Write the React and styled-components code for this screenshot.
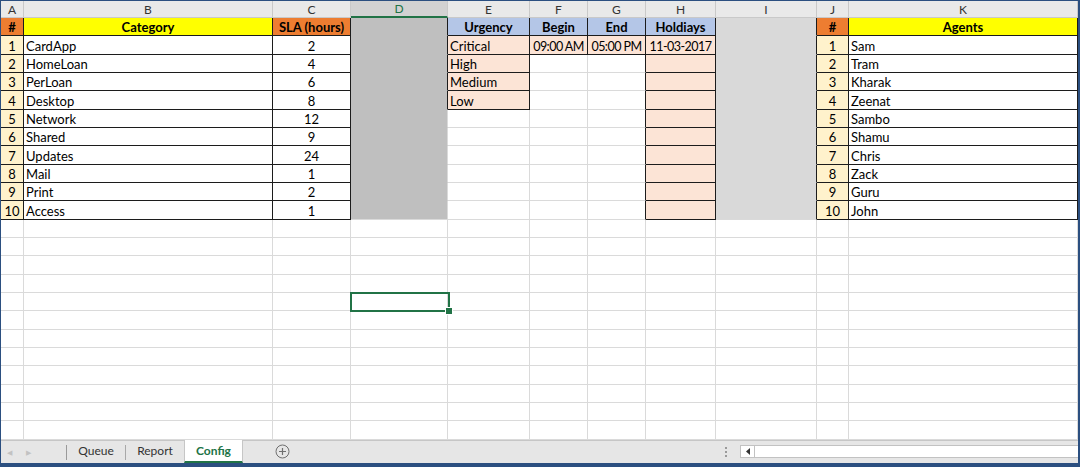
import React from 'react';
import styled, { createGlobalStyle } from 'styled-components';

const Global = createGlobalStyle`
  html, body { margin: 0; padding: 0; background: #fff; }
  body { font-family: "Lato", "Liberation Sans", sans-serif; }
`;

const BLACK = '#1c1c1c';
const GRID = '#dadada';
const ORANGE = '#ed7d31';
const YELLOW = '#ffff00';
const CREAM = '#fff2cc';
const BLUE = '#b4c6e7';
const PEACH = '#fce4d6';
const DGRAY = '#bfbfbf';
const LGRAY = '#d9d9d9';
const GREEN = '#217346';

const Window = styled.div`
  width: 1080px;
  height: 467px;
  box-sizing: border-box;
  border-top: 1px solid #2b4f80;
  border-left: 1px solid #2b4f80;
  border-right: 2px solid #2b4f80;
  border-bottom: 4px solid #2b4f80;
  display: flex;
  flex-direction: column;
  overflow: hidden;
`;

const Sheet = styled.div`
  position: relative;
  display: grid;
  grid-template-columns: 23px 249px 78px 97px 82px 58px 58px 70px 101px 32px 1fr;
  grid-template-rows: 17px repeat(23, 18.333px);
  overflow: hidden;
`;

const ColHead = styled.div`
  box-sizing: border-box;
  background: ${(p) => (p.$active ? '#d2d2d2' : '#e9e9e9')};
  color: ${(p) => (p.$active ? GREEN : '#333')};
  border-right: 1px solid #c9c9c9;
  border-bottom: ${(p) => (p.$active ? `2px solid ${GREEN}` : '1px solid #c9c9c9')};
  font-size: 12px;
  display: flex;
  align-items: center;
  justify-content: center;
`;

const Cell = styled.div`
  box-sizing: border-box;
  background: ${(p) => p.$bg};
  border-right: 1px solid ${(p) => p.$rb};
  border-bottom: 1px solid ${(p) => p.$bb};
  font-size: ${(p) => (p.$tight ? '12.5px' : '13px')};
  letter-spacing: ${(p) => (p.$tight ? '-0.55px' : 'normal')};
  font-weight: ${(p) => (p.$bold ? 700 : 400)};
  color: #000;
  line-height: 15px;
  display: flex;
  align-items: flex-end;
  justify-content: ${(p) => (p.$align === 'center' ? 'center' : 'flex-start')};
  padding: 0 2px 0;
  white-space: nowrap;
  overflow: hidden;
`;

const Selection = styled.div`
  position: absolute;
  left: 349px;
  top: 291px;
  width: 100px;
  height: 20px;
  box-sizing: border-box;
  border: 2px solid ${GREEN};
  pointer-events: none;
`;

const Handle = styled.div`
  position: absolute;
  right: -5px;
  bottom: -5px;
  width: 6px;
  height: 6px;
  background: ${GREEN};
  border: 1px solid #fff;
`;

const TabBar = styled.div`
  flex: 1;
  background: #e6e6e6;
  border-top: 1px solid #c6c6c6;
  display: flex;
  align-items: stretch;
  font-size: 12px;
  color: #333;
`;

const NavArrows = styled.div`
  width: 66px;
  display: flex;
  align-items: center;
  gap: 14px;
  padding-left: 6px;
  box-sizing: border-box;
  border-right: 1px solid #9a9a9a;
  margin: 4px 0 3px;
  color: #c2c2c2;
  font-size: 7px;
`;

const Tab = styled.div`
  width: ${(p) => p.$w}px;
  display: flex;
  align-items: center;
  justify-content: center;
  box-sizing: border-box;
  background: ${(p) => (p.$active ? '#fff' : 'transparent')};
  color: ${(p) => (p.$active ? GREEN : '#333')};
  font-weight: ${(p) => (p.$active ? 700 : 400)};
  border-bottom: ${(p) => (p.$active ? `2px solid ${GREEN}` : '2px solid transparent')};
  margin-top: ${(p) => (p.$active ? '-1px' : '0')};
  ${(p) => (p.$active ? 'border-left: 1px solid #c6c6c6; border-right: 1px solid #c6c6c6;' : '')}
`;

const TabSep = styled.div`
  width: 1px;
  background: #a8a8a8;
  margin: 4px 0 3px;
`;

const AddBtn = styled.div`
  display: flex;
  align-items: center;
  margin-left: 32px;
`;

const Spacer = styled.div`
  flex: 1;
`;

const Dots = styled.div`
  display: flex;
  flex-direction: column;
  justify-content: center;
  gap: 2px;
  margin-right: 13px;
  & > span {
    width: 2px;
    height: 2px;
    background: #9a9a9a;
  }
`;

const Scroll = styled.div`
  width: 338px;
  align-self: center;
  height: 13px;
  box-sizing: border-box;
  border: 1px solid #c2c2c2;
  border-right: none;
  background: #fff;
  display: flex;
`;

const ScrollBtn = styled.div`
  width: 13px;
  border-right: 1px solid #c2c2c2;
  display: flex;
  align-items: center;
  justify-content: center;
`;

const colLetters = ['A', 'B', 'C', 'D', 'E', 'F', 'G', 'H', 'I', 'J', 'K'];
const categories = [
  ['CardApp', 2], ['HomeLoan', 4], ['PerLoan', 6], ['Desktop', 8], ['Network', 12],
  ['Shared', 9], ['Updates', 24], ['Mail', 1], ['Print', 2], ['Access', 1],
];
const urgency = ['Critical', 'High', 'Medium', 'Low'];
const agents = ['Sam', 'Tram', 'Kharak', 'Zeenat', 'Sambo', 'Shamu', 'Chris', 'Zack', 'Guru', 'John'];

function cellSpec(r, c) {
  const s = { bg: '#fff', rb: GRID, bb: GRID, text: '', bold: false, align: 'left', tight: false };
  const inT = r <= 11;
  if (c === 0 && inT) {
    Object.assign(s, { bg: r === 1 ? ORANGE : CREAM, rb: BLACK, bb: BLACK, align: 'center', text: r === 1 ? '#' : String(r - 1), bold: r === 1 });
  } else if (c === 1 && inT) {
    Object.assign(s, { bg: r === 1 ? YELLOW : '#fff', rb: BLACK, bb: BLACK, align: r === 1 ? 'center' : 'left', text: r === 1 ? 'Category' : categories[r - 2][0], bold: r === 1 });
  } else if (c === 2 && inT) {
    Object.assign(s, { bg: r === 1 ? ORANGE : '#fff', rb: BLACK, bb: BLACK, align: 'center', text: r === 1 ? 'SLA (hours)' : String(categories[r - 2][1]), bold: r === 1 });
  } else if (c === 3 && inT) {
    Object.assign(s, { bg: DGRAY, rb: r <= 5 ? BLACK : GRID, bb: r === 11 ? GRID : DGRAY });
  } else if (c === 4 && r <= 5) {
    Object.assign(s, { bg: r === 1 ? BLUE : PEACH, rb: BLACK, bb: BLACK, align: r === 1 ? 'center' : 'left', text: r === 1 ? 'Urgency' : urgency[r - 2], bold: r === 1 });
  } else if ((c === 5 || c === 6) && r <= 2) {
    const head = c === 5 ? 'Begin' : 'End';
    const val = c === 5 ? '09:00 AM' : '05:00 PM';
    Object.assign(s, { bg: r === 1 ? BLUE : PEACH, rb: BLACK, bb: BLACK, align: 'center', text: r === 1 ? head : val, bold: r === 1, tight: r === 2 });
  } else if (c === 6 && inT) {
    Object.assign(s, { rb: BLACK });
  } else if (c === 7 && inT) {
    Object.assign(s, { bg: r === 1 ? BLUE : PEACH, rb: BLACK, bb: BLACK, align: 'center', text: r === 1 ? 'Holdiays' : r === 2 ? '11-03-2017' : '', bold: r === 1, tight: r === 2 });
  } else if (c === 8 && inT) {
    Object.assign(s, { bg: LGRAY, rb: BLACK, bb: r === 11 ? GRID : LGRAY });
  } else if (c === 9 && inT) {
    Object.assign(s, { bg: r === 1 ? ORANGE : CREAM, rb: BLACK, bb: BLACK, align: 'center', text: r === 1 ? '#' : String(r - 1), bold: r === 1 });
  } else if (c === 10 && inT) {
    Object.assign(s, { bg: r === 1 ? YELLOW : '#fff', rb: BLACK, bb: BLACK, align: r === 1 ? 'center' : 'left', text: r === 1 ? 'Agents' : agents[r - 2], bold: r === 1 });
  }
  return s;
}

export default function App() {
  const cells = [];
  for (let r = 1; r <= 23; r++) {
    for (let c = 0; c < 11; c++) {
      const s = cellSpec(r, c);
      cells.push(
        <Cell key={`${r}-${c}`} $bg={s.bg} $rb={s.rb} $bb={s.bb} $bold={s.bold} $align={s.align} $tight={s.tight}>
          {s.text}
        </Cell>
      );
    }
  }
  return (
    <>
      <Global />
      <Window>
        <Sheet>
          {colLetters.map((l) => (
            <ColHead key={l} $active={l === 'D'}>{l}</ColHead>
          ))}
          {cells}
          <Selection>
            <Handle />
          </Selection>
        </Sheet>
        <TabBar>
          <NavArrows>
            <span>◀</span>
            <span>▶</span>
          </NavArrows>
          <Tab $w={58}>Queue</Tab>
          <TabSep />
          <Tab $w={58}>Report</Tab>
          <Tab $w={59} $active>Config</Tab>
          <AddBtn>
            <svg width="15" height="15" viewBox="0 0 15 15">
              <circle cx="7.5" cy="7.5" r="6.5" fill="none" stroke="#6f6f6f" strokeWidth="1" />
              <path d="M7.5 4v7M4 7.5h7" stroke="#6f6f6f" strokeWidth="1.2" />
            </svg>
          </AddBtn>
          <Spacer />
          <Dots>
            <span />
            <span />
            <span />
          </Dots>
          <Scroll>
            <ScrollBtn>
              <svg width="6" height="7" viewBox="0 0 6 7">
                <path d="M5 0v7L1 3.5z" fill="#333" />
              </svg>
            </ScrollBtn>
          </Scroll>
        </TabBar>
      </Window>
    </>
  );
}
